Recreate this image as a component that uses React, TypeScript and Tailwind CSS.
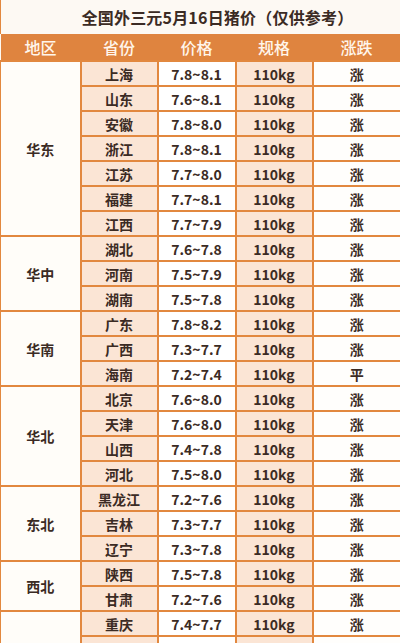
const font = { fontFamily: '"Noto Sans CJK SC", "Noto Sans", sans-serif' }

type Row = { province: string; price: string; change: string }
type Group = { region: string; rows: Row[] }

const r = (province: string, price: string, change = '涨'): Row => ({ province, price, change })

const groups: Group[] = [
  {
    region: '华东',
    rows: [
      r('上海', '7.8~8.1'),
      r('山东', '7.6~8.1'),
      r('安徽', '7.8~8.0'),
      r('浙江', '7.8~8.1'),
      r('江苏', '7.7~8.0'),
      r('福建', '7.7~8.1'),
      r('江西', '7.7~7.9'),
    ],
  },
  {
    region: '华中',
    rows: [r('湖北', '7.6~7.8'), r('河南', '7.5~7.9'), r('湖南', '7.5~7.8')],
  },
  {
    region: '华南',
    rows: [r('广东', '7.8~8.2'), r('广西', '7.3~7.7'), r('海南', '7.2~7.4', '平')],
  },
  {
    region: '华北',
    rows: [r('北京', '7.6~8.0'), r('天津', '7.6~8.0'), r('山西', '7.4~7.8'), r('河北', '7.5~8.0')],
  },
  {
    region: '东北',
    rows: [r('黑龙江', '7.2~7.6'), r('吉林', '7.3~7.7'), r('辽宁', '7.3~7.8')],
  },
  {
    region: '西北',
    rows: [r('陕西', '7.5~7.8'), r('甘肃', '7.2~7.6')],
  },
  {
    region: '西南',
    rows: [r('重庆', '7.4~7.7'), r('四川', '7.3~7.6'), r('贵州', '7.3~7.7'), r('云南', '7.2~7.6')],
  },
]

const cell = 'h-[25px] p-0 border-2 border-[#e2883f] text-center align-middle text-[14px] font-bold text-[#3b2b24] leading-none'

export default function App() {
  return (
    <div className="w-[400px] h-[643px] overflow-hidden bg-[#fdf9f3]" style={font}>
      {/* Title */}
      <div className="h-[34px] flex items-center justify-center pl-[34px] border-l border-[#e2883f]">
        <h1 className="text-[16px] font-bold text-[#3b2b24] tracking-[0.2px]">
          全国外三元5月16日猪价（仅供参考）
        </h1>
      </div>

      <table className="w-[400px] table-fixed border-collapse">
        <colgroup>
          <col className="w-[80px]" />
          <col className="w-[77px]" />
          <col className="w-[78px]" />
          <col className="w-[77px]" />
          <col className="w-[88px]" />
        </colgroup>
        <thead>
          <tr className="bg-[#df843f]">
            {['地区', '省份', '价格', '规格', '涨跌'].map(h => (
              <th
                key={h}
                className="h-[27px] p-0 text-center text-[16px] font-medium text-[#fff6ec] leading-none"
              >
                {h}
              </th>
            ))}
          </tr>
        </thead>
        <tbody>
          {groups.map(g =>
            g.rows.map((row, i) => (
              <tr key={g.region + row.province}>
                {i === 0 && (
                  <td
                    rowSpan={g.rows.length}
                    className={`${cell} bg-[#fffdf9] border-l-[1px]`}
                  >
                    {g.region}
                  </td>
                )}
                <td className={`${cell} bg-[#fbe5d5]`}>{row.province}</td>
                <td className={`${cell} bg-white`}>{row.price}</td>
                <td className={`${cell} bg-[#fbe5d5]`}>110kg</td>
                <td className={`${cell} bg-[#fffefc] border-r-[1px]`}>{row.change}</td>
              </tr>
            ))
          )}
        </tbody>
      </table>
    </div>
  )
}
